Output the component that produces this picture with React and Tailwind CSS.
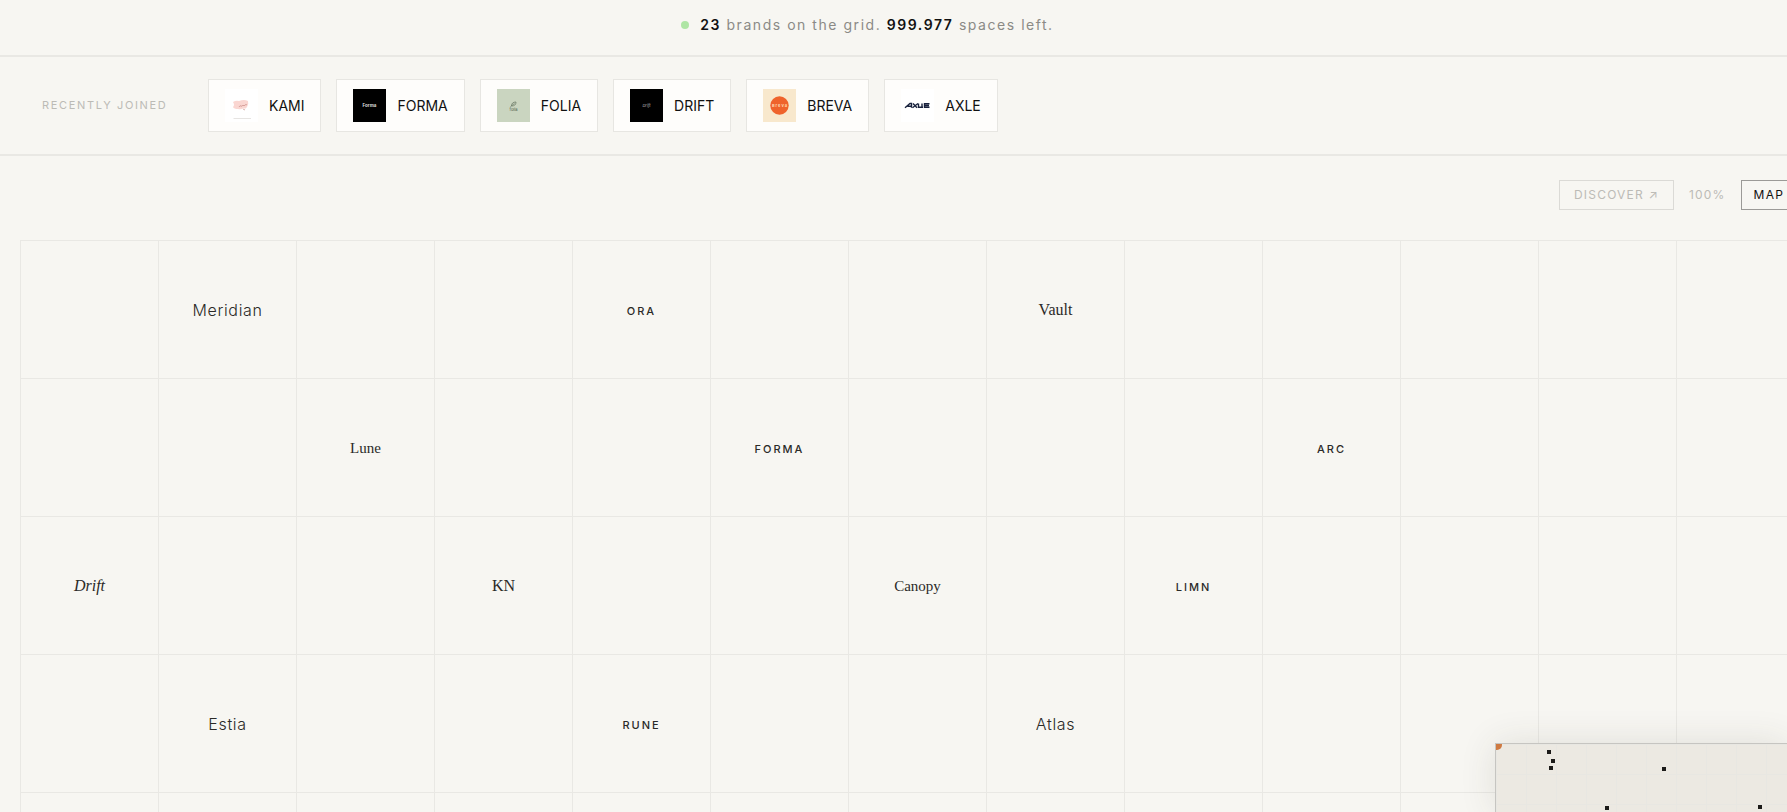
const COLUMNS = 13;
const ROWS = 5;

const recentBrands = ['KAMI', 'FORMA', 'FOLIA', 'DRIFT', 'BREVA', 'AXLE'];

const placed = {
  '0-1': { name: 'Meridian', style: 'light' },
  '0-4': { name: 'ORA', style: 'caps' },
  '0-7': { name: 'Vault', style: 'display' },
  '1-2': { name: 'Lune', style: 'serif' },
  '1-5': { name: 'FORMA', style: 'caps' },
  '1-9': { name: 'ARC', style: 'caps' },
  '2-0': { name: 'Drift', style: 'italic' },
  '2-3': { name: 'KN', style: 'display' },
  '2-6': { name: 'Canopy', style: 'serif' },
  '2-8': { name: 'LIMN', style: 'caps' },
  '3-1': { name: 'Estia', style: 'light' },
  '3-4': { name: 'RUNE', style: 'caps' },
  '3-7': { name: 'Atlas', style: 'light' },
};

const wordmarkStyles = {
  light: 'pt-px text-base font-light tracking-[0.04em]',
  caps: 'pt-1 text-[11px] font-medium tracking-[0.18em]',
  display: "font-['Liberation_Serif',serif] text-base",
  serif: "pt-px font-['Liberation_Serif',serif] text-[15px]",
  italic: "font-['Liberation_Serif',serif] text-base italic",
};

// Dots on the minimap, in pixels from its top left corner
const mapDots = [
  { x: 51, y: 6 },
  { x: 55, y: 15 },
  { x: 53, y: 22 },
  { x: 166, y: 23 },
  { x: 109, y: 62 },
  { x: 262, y: 61 },
];

function BrandLogo({ name }) {
  return (
    <svg viewBox="0 0 33 33" className="size-[33px] shrink-0" aria-hidden="true">
      {name === 'KAMI' && (
        <>
          <rect width="33" height="33" fill="#fff" />
          <path d="M8 13 Q11 11 14 12 Q19 10 23 12 Q24 15 22 18 Q20 21 19 19 Q16 21 13 20 Q9 20 8 18 Q10 16 8 13 Z" fill="#fad6d1" />
          <path d="M14 18 q1-2 2-1 q1 1 2-1 q1 2 2 0 q1-1 2 0 M18 20 l2 1" fill="none" stroke="#c98d87" strokeWidth="0.7" />
          <path d="M8.500 29.500 H26" stroke="#e6e4e2" />
        </>
      )}
      {name === 'FORMA' && (
        <>
          <rect width="33" height="33" />
          <text x="16.500" y="18" textAnchor="middle" fontSize="4.500" fontWeight="700" fill="#ddd">Forma</text>
        </>
      )}
      {name === 'FOLIA' && (
        <>
          <rect width="33" height="33" fill="#cad5c0" />
          <path d="M14.500 17 q0-4 4.500-4 q0 4-4.500 4 M13.500 17.500 l4-3" fill="none" stroke="#6f7d69" strokeWidth="0.8" />
          <text x="16.500" y="21.500" textAnchor="middle" fontSize="4" fill="#4d5a49">folia</text>
        </>
      )}
      {name === 'DRIFT' && (
        <>
          <rect width="33" height="33" />
          <text x="16.500" y="18" textAnchor="middle" fontSize="4" fontStyle="italic" fill="#bbb">Drift</text>
        </>
      )}
      {name === 'BREVA' && (
        <>
          <rect width="33" height="33" fill="#f8e8cd" />
          <circle cx="16.500" cy="16.500" r="9.200" fill="#ef632c" />
          <text x="16.500" y="18" textAnchor="middle" fontSize="4" fontWeight="700" fill="#ffd9b0">B r e v a</text>
        </>
      )}
      {name === 'AXLE' && (
        <>
          <rect width="33" height="33" fill="#fff" />
          <path
            d="M4 18.700 L9 14.500 H10.500 V18.700 M6.500 17.300 H10.500 M11.500 18.700 L17 14.500 M12 14.500 L16 18.700 M17.500 14.500 V18.300 H22 M21 14.500 V18.300 M28.500 14.700 H23.500 V18.300 H28.500 M23.500 16.500 H28"
            fill="none"
            stroke="#17213c"
            strokeWidth="1.400"
          />
        </>
      )}
    </svg>
  );
}

function Minimap() {
  return (
    <div className="absolute right-0 bottom-0 h-[69px] w-[292px] overflow-hidden border-t border-l border-[#c6c5c1] bg-[#ece9e2] shadow-[0_0_36px_rgba(60,60,40,0.12)]">
      <div className="h-full bg-[linear-gradient(to_right,#e8e7e2_1px,transparent_1px),linear-gradient(to_bottom,#e8e7e2_1px,transparent_1px)] bg-[size:30px_30px]" />
      <span className="absolute -top-1 -left-1 size-[10px] rounded-full bg-[#cf7a42]" />
      {mapDots.map((dot) => (
        <span
          key={`${dot.x}-${dot.y}`}
          className="absolute size-1 bg-[#1c1b19]"
          style={{ left: dot.x, top: dot.y }}
        />
      ))}
    </div>
  );
}

export default function App() {
  return (
    <div className="relative h-screen overflow-hidden bg-[#f7f6f2] font-['Inter',sans-serif] text-[#111]">
      <header className="flex h-[57px] items-center justify-center gap-[11px] border-b-2 border-[#e9e8e4] pr-[52px] pb-[5px]">
        <span className="size-2 rounded-full bg-[#aee5a4]" />
        <p className="text-sm tracking-[0.11em] text-[#8b8a86]">
          <strong className="font-semibold text-[#111]">23</strong> brands on the grid.{' '}
          <strong className="font-semibold text-[#111]">999.977</strong> spaces left.
        </p>
      </header>

      <section className="flex items-center border-b-2 border-[#e9e8e4] py-[22px] pl-[42px]">
        <h2 className="w-[166px] shrink-0 text-[11px] tracking-[0.15em] text-[#bcbbb6]">RECENTLY JOINED</h2>
        <div className="flex gap-[15px]">
          {recentBrands.map((name) => (
            <a
              key={name}
              href="#"
              className="flex h-[53px] items-center gap-[11px] border border-[#e7e6e2] bg-[#fefdfb] px-4 text-sm"
            >
              <BrandLogo name={name} />
              {name}
            </a>
          ))}
        </div>
      </section>

      <div className="-mr-[10px] flex h-[84px] items-center justify-end gap-[15px] pb-[6px] text-xs">
        <button className="h-[30px] border border-[#dbdad6] px-[14px] tracking-[0.1em] text-[#bcbbb6]">DISCOVER ↗</button>
        <span className="tracking-[0.1em] text-[#bcbbb6]">100%</span>
        <button className="h-[30px] border border-[#9b9a97] px-3 tracking-[0.1em] text-[#111]">MAP</button>
      </div>

      <main className="ml-5 grid w-max auto-rows-[138px] grid-cols-[repeat(13,138px)] border-t border-l border-[#e9e8e4]">
        {Array.from({ length: ROWS * COLUMNS }, (_, i) => {
          const brand = placed[`${Math.floor(i / COLUMNS)}-${i % COLUMNS}`];
          return (
            <div key={i} className="flex items-center justify-center border-r border-b border-[#e9e8e4] text-[#2b2a28]">
              {brand && <span className={wordmarkStyles[brand.style]}>{brand.name}</span>}
            </div>
          );
        })}
      </main>

      <Minimap />
    </div>
  );
}
